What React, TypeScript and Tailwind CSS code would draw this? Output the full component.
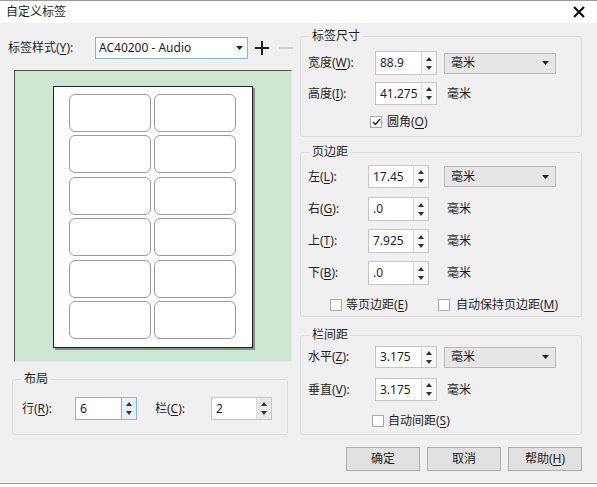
import React from 'react';

const font = "font-['Noto_Sans','Noto_Sans_CJK_SC',sans-serif]";

function Key({ children }: { children: React.ReactNode }) {
  return <span className="underline underline-offset-2">{children}</span>;
}

function SpinArrows({ focused = false, grey = false }: { focused?: boolean; grey?: boolean }) {
  return (
    <div
      className={`flex w-[15px] flex-col items-center justify-center gap-[5px] border-l ${
        focused ? 'border-[#7eb4ea] bg-[#e5f1fb]' : grey ? 'border-[#d9d9d9] bg-[#e8e8e8]' : 'border-[#d9d9d9] bg-[#f7f7f7]'
      }`}
    >
      <svg width="6" height="4" viewBox="0 0 6 4">
        <path d="M3 0 L6 4 L0 4 Z" fill="#333" />
      </svg>
      <svg width="6" height="4" viewBox="0 0 6 4">
        <path d="M0 0 L6 0 L3 4 Z" fill="#333" />
      </svg>
    </div>
  );
}

function Spinner({
  value,
  w,
  h = 'h-[23px]',
  focused = false,
  grey = false,
}: {
  value: string;
  w: string;
  h?: string;
  focused?: boolean;
  grey?: boolean;
}) {
  return (
    <div className={`flex ${w} ${h} border bg-white ${focused ? 'border-[#7eb4ea]' : 'border-[#c5c5c5]'}`}>
      <div className="flex flex-1 items-center pl-[4px]">{value}</div>
      <SpinArrows focused={focused} grey={grey} />
    </div>
  );
}

function Dropdown() {
  return (
    <div className="ml-[7px] flex h-[21px] w-[112px] items-center justify-between border border-[#b9b9b9] bg-[#e6e6e6] pl-[6px] pr-[6px]">
      <span>毫米</span>
      <svg width="7" height="4" viewBox="0 0 7 4">
        <path d="M0 0 L7 0 L3.5 4 Z" fill="#222" />
      </svg>
    </div>
  );
}

function Checkbox({ checked = false }: { checked?: boolean }) {
  return (
    <div className="flex h-[12px] w-[12px] items-center justify-center border border-[#a8a8a8] bg-white">
      {checked && (
        <svg width="9" height="8" viewBox="0 0 9 8">
          <path d="M1 4 L3.5 6.5 L8 1" stroke="#222" strokeWidth="1.4" fill="none" />
        </svg>
      )}
    </div>
  );
}

function Group({
  title,
  className,
  children,
}: {
  title: string;
  className: string;
  children: React.ReactNode;
}) {
  return (
    <fieldset className={`rounded-[3px] border border-[#dcdcdc] ${className}`}>
      <legend className="ml-[9px] px-[2px] leading-[14px]">{title}</legend>
      {children}
    </fieldset>
  );
}

function Row({
  label,
  labelW,
  className,
  children,
}: {
  label: React.ReactNode;
  labelW: string;
  className: string;
  children: React.ReactNode;
}) {
  return (
    <div className={`flex items-center pl-[7px] ${className}`}>
      <div className={labelW}>{label}</div>
      {children}
    </div>
  );
}

function Preview() {
  const cells = Array.from({ length: 12 });
  return (
    <div className="ml-[6px] mt-[11px] flex h-[292px] w-[278px] justify-center border-l border-t border-b border-r border-l-[#555] border-t-[#555] border-r-[#e8e8e8] border-b-[#e8e8e8] bg-[#cde8d0] pt-[15px]">
      <div className="h-[262px] w-[200px] border border-[#222] bg-white pl-[15px] pt-[7px] shadow-[2px_2px_0_#8c8c8c]">
        <div className="grid grid-cols-[82px_82px] gap-x-[3px] gap-y-[3.4px]">
          {cells.map((_, i) => (
            <div key={i} className="h-[38px] rounded-[6px] border border-[#9c9c9c]" />
          ))}
        </div>
      </div>
    </div>
  );
}

export default function App() {
  return (
    <div className={`h-[487px] w-[597px] bg-white text-[12px] text-[#1e1e1e] ${font}`}>
      <div className="flex h-[484px] flex-col border-y border-[#9c9c9c] bg-[#f0f0f0]">
        {/* title bar */}
        <div className="flex h-[22px] items-center justify-between bg-white pl-[6px] pr-[12px]">
          <span>自定义标签</span>
          <svg width="12" height="12" viewBox="0 0 12 12">
            <path d="M1 1 L11 11 M11 1 L1 11" stroke="#111" strokeWidth="2.2" />
          </svg>
        </div>

        <div className="flex flex-1">
          {/* left column */}
          <div className="w-[300px] pl-[8px]">
            <div className="mt-[14px] flex h-[22px] items-center">
              <div className="w-[87px]">
                标签样式(<Key>Y</Key>):
              </div>
              <div className="flex h-[22px] w-[153px] items-center justify-between border border-[#7eb4ea] bg-white pl-[3px] pr-[4px]">
                <span>AC40200 - Audio</span>
                <svg width="7" height="4" viewBox="0 0 7 4">
                  <path d="M0 0 L7 0 L3.5 4 Z" fill="#222" />
                </svg>
              </div>
              <svg className="ml-[6px]" width="16" height="16" viewBox="0 0 16 16">
                <path d="M8 1 V15 M1 8 H15" stroke="#222" strokeWidth="2" />
              </svg>
              <svg className="ml-[8px]" width="16" height="16" viewBox="0 0 16 16">
                <path d="M1 8 H15" stroke="#c4c4c4" strokeWidth="1.5" />
              </svg>
            </div>

            <Preview />

            <Group title="布局" className="ml-[4px] mt-[10px] h-[63px] w-[276px]">
              <div className="mt-[11px] flex items-center pl-[9px]">
                <div className="w-[53px]">
                  行(<Key>R</Key>):
                </div>
                <Spinner value="6" w="w-[62px]" focused />
                <div className="ml-[18px] w-[56px]">
                  栏(<Key>C</Key>):
                </div>
                <Spinner value="2" w="w-[61px]" grey />
              </div>
            </Group>
          </div>

          {/* right column */}
          <div className="w-[282px]">
            <Group title="标签尺寸" className="mt-[6px] h-[108px]">
              <Row label={<>宽度(<Key>W</Key>):</>} labelW="w-[67px]" className="mt-[8px]">
                <Spinner value="88.9" w="w-[62px]" h="h-[24px]" />
                <Dropdown />
              </Row>
              <Row label={<>高度(<Key>I</Key>):</>} labelW="w-[67px]" className="mt-[7px]">
                <Spinner value="41.275" w="w-[62px]" />
                <span className="ml-[10px]">毫米</span>
              </Row>
              <div className="mt-[8px] flex items-center gap-[5px] pl-[69px]">
                <Checkbox checked />
                <span>
                  圆角(<Key>O</Key>)
                </span>
              </div>
            </Group>

            <Group title="页边距" className="mt-[8px] h-[172px]">
              <Row label={<>左(<Key>L</Key>):</>} labelW="w-[60px]" className="mt-[6px]">
                <Spinner value="17.45" w="w-[61px]" />
                <div className="ml-[8px]">
                  <Dropdown />
                </div>
              </Row>
              <Row label={<>右(<Key>G</Key>):</>} labelW="w-[60px]" className="mt-[9px]">
                <Spinner value=".0" w="w-[61px]" h="h-[24px]" />
                <span className="ml-[18px]">毫米</span>
              </Row>
              <Row label={<>上(<Key>T</Key>):</>} labelW="w-[60px]" className="mt-[8px]">
                <Spinner value="7.925" w="w-[61px]" h="h-[24px]" />
                <span className="ml-[18px]">毫米</span>
              </Row>
              <Row label={<>下(<Key>B</Key>):</>} labelW="w-[60px]" className="mt-[8px]">
                <Spinner value=".0" w="w-[61px]" h="h-[24px]" />
                <span className="ml-[18px]">毫米</span>
              </Row>
              <div className="mt-[11px] flex items-center pl-[29px]">
                <Checkbox />
                <span className="ml-[4px] w-[92px]">
                  等页边距(<Key>E</Key>)
                </span>
                <Checkbox />
                <span className="ml-[6px]">
                  自动保持页边距(<Key>M</Key>)
                </span>
              </div>
            </Group>

            <Group title="栏间距" className="mt-[11px] h-[107px]">
              <Row label={<>水平(<Key>Z</Key>):</>} labelW="w-[67px]" className="mt-[4px]">
                <Spinner value="3.175" w="w-[62px]" h="h-[22px]" />
                <Dropdown />
              </Row>
              <Row label={<>垂直(<Key>V</Key>):</>} labelW="w-[67px]" className="mt-[10px]">
                <Spinner value="3.175" w="w-[62px]" h="h-[23px]" />
                <span className="ml-[10px]">毫米</span>
              </Row>
              <div className="mt-[11px] flex items-center gap-[4px] pl-[71px]">
                <Checkbox />
                <span>
                  自动间距(<Key>S</Key>)
                </span>
              </div>
            </Group>

            <div className="mt-[12px] flex justify-end gap-[7px]">
              {[
                <>确定</>,
                <>取消</>,
                <>
                  帮助(<Key>H</Key>)
                </>,
              ].map((t, i) => (
                <div
                  key={i}
                  className="flex h-[24px] w-[74px] items-center justify-center border border-[#adadad] bg-[#e1e1e1]"
                >
                  {t}
                </div>
              ))}
            </div>
          </div>
        </div>
      </div>
    </div>
  );
}
